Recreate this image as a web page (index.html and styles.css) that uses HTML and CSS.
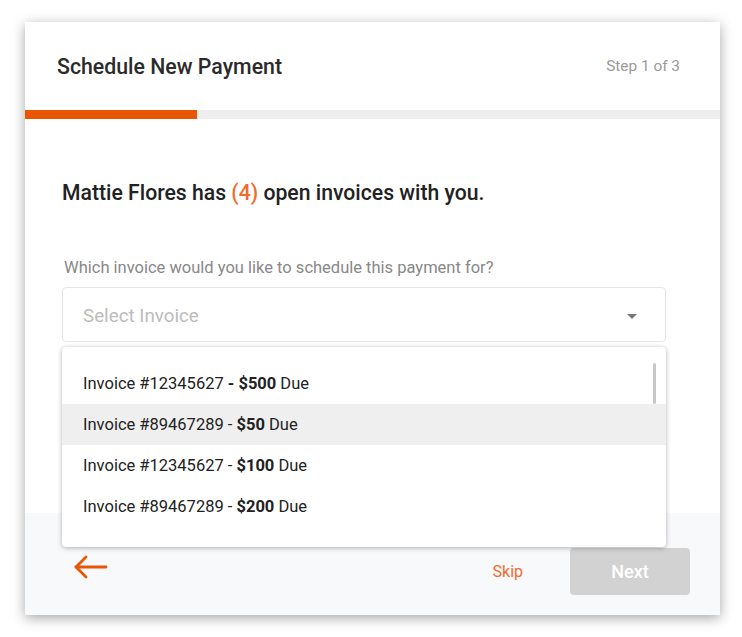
FILE: index.html
```html
<!DOCTYPE html>
<html lang="en">
<head>
    <meta charset="UTF-8">
    <meta name="viewport" content="width=device-width, initial-scale=1.0">
    <title>Schedule New Payment</title>
    <link rel="stylesheet" href="styles.css">
</head>
<body>
    <div class="card">
        <div class="header">
            <h1>Schedule New Payment</h1>
            <span class="step">Step 1 of 3</span>
        </div>
        <div class="progress"><div class="progress-fill"></div></div>

        <div class="content">
            <h2>Mattie Flores has <span class="count">(4)</span> open invoices with you.</h2>
            <label for="invoiceSelect">Which invoice would you like to schedule this payment for?</label>
            <div class="select-wrap">
                <div class="select" id="invoiceSelect">
                    <span class="placeholder">Select Invoice</span>
                    <span class="caret"></span>
                </div>
                <ul class="dropdown">
                    <li>Invoice #12345627 <b>- $500</b> Due</li>
                    <li class="active">Invoice #89467289 - <b>$50</b> Due</li>
                    <li>Invoice #12345627 - <b>$100</b> Due</li>
                    <li>Invoice #89467289 - <b>$200</b> Due</li>
                    <div class="scrollbar"></div>
                </ul>
            </div>
        </div>

        <div class="footer">
            <a href="#" class="back">
                <svg width="34" height="24" viewBox="0 0 34 24" fill="none" stroke="#ea5504" stroke-width="2.8" stroke-linecap="round" stroke-linejoin="round">
                    <path d="M2 12 H32"/>
                    <path d="M12 2 L2 12 L12 22"/>
                </svg>
            </a>
            <a href="#" class="skip">Skip</a>
            <button class="next-btn" disabled>Next</button>
        </div>
    </div>
</body>
</html>
```

FILE: styles.css
```css
body {
    margin: 0;
    padding: 22px 22px 22px 25px;
    background: white;
    font-family: Roboto, 'Liberation Sans', sans-serif;
    color: #222;
}
.card {
    width: 695px;
    background: white;
    box-shadow: 0 3px 12px rgba(0,0,0,0.35);
}
.header {
    height: 88px;
    display: flex;
    align-items: center;
    justify-content: space-between;
    padding: 0 40px 0 32px;
}
h1 {
    margin: 0;
    font-size: 21.3px;
    font-weight: 500;
    color: #2b2b2b;
}
.step {
    font-size: 15.4px;
    color: #9a9a9a;
}
.progress {
    height: 9px;
    background: #eeeeee;
}
.progress-fill {
    width: 172px;
    height: 100%;
    background: #ea5504;
}
.content {
    height: 394px;
    box-sizing: border-box;
    padding: 60px 54px 0 37px;
}
h2 {
    margin: 0;
    font-size: 21.2px;
    line-height: 28px;
    font-weight: 500;
    color: #222;
}
.count {
    color: #f26a2c;
}
label {
    display: block;
    margin: 51px 0 9px 2px;
    font-size: 16.5px;
    line-height: 20px;
    color: #888;
}
.select-wrap {
    position: relative;
}
.select {
    height: 55px;
    box-sizing: border-box;
    border: 1px solid #e6e6e6;
    border-radius: 4px;
    display: flex;
    align-items: center;
    justify-content: space-between;
    padding: 3px 28px 0 20px;
}
.placeholder {
    font-size: 18.8px;
    color: #bcbcbc;
}
.caret {
    width: 0;
    height: 0;
    border-left: 5px solid transparent;
    border-right: 5px solid transparent;
    border-top: 5px solid #777;
}
.dropdown {
    position: absolute;
    top: 60px;
    left: 0;
    right: 0;
    height: 200px;
    box-sizing: border-box;
    margin: 0;
    padding: 16px 0 0 0;
    list-style: none;
    background: white;
    border-radius: 4px;
    box-shadow: 0 1px 5px rgba(0,0,0,0.3);
    z-index: 2;
}
.dropdown li {
    height: 41px;
    line-height: 41px;
    padding-left: 21px;
    font-size: 16.5px;
    color: #222;
}
.dropdown li.active {
    background: #efefef;
}
.dropdown b {
    font-weight: 700;
}
.scrollbar {
    position: absolute;
    top: 16px;
    right: 10px;
    width: 3px;
    height: 41px;
    border-radius: 2px;
    background: #c8c8c8;
}
.footer {
    height: 102px;
    box-sizing: border-box;
    background: #f8f9fa;
    display: flex;
    align-items: center;
    padding: 35px 30px 20px 49px;
}
.back {
    display: flex;
    margin-bottom: 10px;
}
.skip {
    margin-left: auto;
    margin-right: 47px;
    font-size: 16px;
    color: #f26a2c;
    text-decoration: none;
}
.next-btn {
    width: 120px;
    height: 47px;
    border: none;
    border-radius: 4px;
    background: #d2d2d2;
    color: white;
    font-family: inherit;
    font-size: 18px;
    font-weight: 500;
}
```
